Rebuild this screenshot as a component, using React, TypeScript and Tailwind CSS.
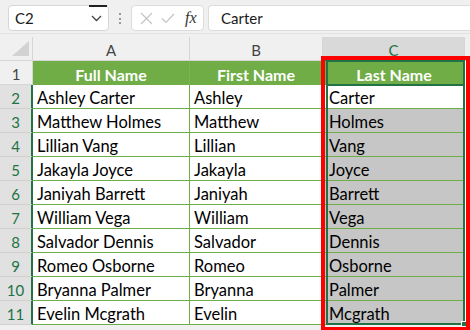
const rows = [
  ["Ashley Carter", "Ashley", "Carter"],
  ["Matthew Holmes", "Matthew", "Holmes"],
  ["Lillian Vang", "Lillian", "Vang"],
  ["Jakayla Joyce", "Jakayla", "Joyce"],
  ["Janiyah Barrett", "Janiyah", "Barrett"],
  ["William Vega", "William", "Vega"],
  ["Salvador Dennis", "Salvador", "Dennis"],
  ["Romeo Osborne", "Romeo", "Osborne"],
  ["Bryanna Palmer", "Bryanna", "Palmer"],
  ["Evelin Mcgrath", "Evelin", "Mcgrath"],
];

const font = { fontFamily: "Lato, 'Open Sans', sans-serif" };

const App = () => {
  return (
    <div
      className="relative w-[470px] h-[330px] overflow-hidden bg-[#f0f0f0] text-[#1a1a1a]"
      style={font}
    >
      {/* Formula bar */}
      <div className="flex items-start h-[33px] pt-[5px] pl-[8px]">
        <div className="relative flex items-center w-[101px] h-[26px] bg-white border border-[#d6d6d6] rounded-[4px] pl-[6px] text-[15px]">
          C2
          <div className="absolute right-[1px] top-[-1px] w-[18px] h-[1.5px] bg-[#222]" />
          <svg className="absolute right-[6px] top-[9px]" width="11" height="7" viewBox="0 0 11 7">
            <path d="M1 1l4.5 4.5L10 1" fill="none" stroke="#444" strokeWidth="1.3" />
          </svg>
        </div>
        <div className="flex flex-col gap-[2.5px] mx-[10px] mt-[8px]">
          <div className="w-[2px] h-[2px] bg-[#9a9a9a]" />
          <div className="w-[2px] h-[2px] bg-[#9a9a9a]" />
          <div className="w-[2px] h-[2px] bg-[#9a9a9a]" />
        </div>
        <div className="flex items-center w-[73px] h-[26px] bg-white border border-[#dcdcdc] rounded-[4px] pl-[8px]">
          <svg width="13" height="13" viewBox="0 0 13 13">
            <path d="M1 1l11 11M12 1L1 12" stroke="#c4c4c4" strokeWidth="1.2" />
          </svg>
          <svg className="ml-[8px]" width="14" height="11" viewBox="0 0 14 11">
            <path d="M1 5.5l4 4L13 1" fill="none" stroke="#c4c4c4" strokeWidth="1.2" />
          </svg>
          <span
            className="ml-[10px] text-[16px] italic text-[#333]"
            style={{ fontFamily: "'Liberation Serif', serif" }}
          >
            fx
          </span>
        </div>
        <div className="flex items-center flex-1 h-[26px] ml-[4px] bg-white border border-[#dcdcdc] rounded-l-[4px] border-r-0 pl-[12px] text-[15px]">
          Carter
        </div>
      </div>

      {/* Sheet */}
      <div className="border-t border-[#e2e2e2] pt-[3px]">
        <div className="grid grid-cols-[33px_157px_133px_142px_5px] auto-rows-[24px]">
          {/* column headers */}
          <div className="relative border-r border-b border-[#d6d6d6]">
            <svg className="absolute right-[3px] bottom-[4px]" width="17" height="15" viewBox="0 0 17 15">
              <path d="M17 0V15H0z" fill="#d2d2d2" />
            </svg>
          </div>
          <div className="flex items-center justify-center pt-[4px] border-r border-b border-[#d6d6d6] text-[15px] text-[#444]">A</div>
          <div className="flex items-center justify-center pt-[4px] border-r border-b border-[#d6d6d6] text-[15px] text-[#444]">B</div>
          <div className="flex items-center justify-center pt-[4px] bg-[#d9d9d9] border-r border-[#d6d6d6] border-b-2 border-b-[#217346] text-[15px] text-[#217346]">C</div>
          <div className="border-b border-[#d6d6d6]" />

          {/* row 1 */}
          <div className="flex items-center justify-center pt-[4px] border-r border-b border-[#d6d6d6] text-[15px] text-[#444]">1</div>
          <div className="flex items-center justify-center pt-[3px] bg-[#70ad47] border-r border-[#79b551] text-white font-bold text-[16px]">Full Name</div>
          <div className="flex items-center justify-center pt-[3px] bg-[#70ad47] border-r border-[#79b551] text-white font-bold text-[16px]">First Name</div>
          <div className="flex items-center justify-center pt-[3px] bg-[#70ad47] text-white font-bold text-[16px]">Last Name</div>
          <div className="bg-white" />

          {rows.map((r, i) => (
            <div key={i} className="contents">
              <div className="flex items-center justify-center pt-[4px] bg-[#e1e1e1] border-b border-[#d0d0d0] border-r-2 border-r-[#217346] text-[15px] text-[#217346]">
                {i + 2}
              </div>
              <div className="flex items-center pl-[4px] pt-[3px] bg-white border-r border-b border-[#70ad47] text-[16.5px] text-black">{r[0]}</div>
              <div className="flex items-center pl-[4px] pt-[3px] bg-white border-r border-b border-[#70ad47] text-[16.5px] text-black">{r[1]}</div>
              <div
                className={`flex items-center pl-[6px] pt-[3px] border-b border-[#70ad47] text-[16.5px] text-black ${
                  i === 0 ? "bg-white" : "bg-[#c6c6c6]"
                }`}
              >
                {r[2]}
              </div>
              <div className="bg-white" />
            </div>
          ))}
        </div>
      </div>

      {/* selection frame */}
      <div className="absolute left-[326px] top-[60px] w-[139px] h-[265px] border-2 border-[#217346]" />
      <div className="absolute left-[326px] top-[84px] w-[139px] h-[2px] bg-[#217346]" />
      <div className="absolute left-[461px] top-[321px] w-[6px] h-[6px] bg-[#217346] border border-white" />

      {/* red annotation box */}
      <div className="absolute left-[321px] top-[56px] w-[149px] h-[275px] border-4 border-[#ff0000]" />
    </div>
  );
};

export default App;
